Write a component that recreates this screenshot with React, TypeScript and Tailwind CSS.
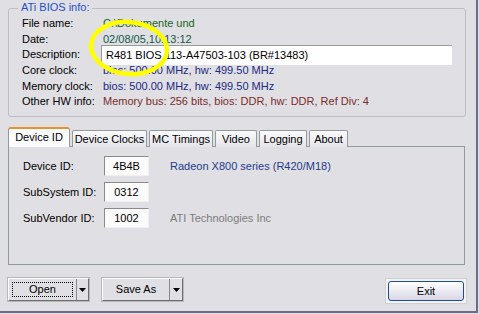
import React from "react";

const font = { fontFamily: '"Liberation Sans", Arial, sans-serif' };

const InfoRow = ({ label, children }: { label: string; children: React.ReactNode }) => (
  <div className="flex items-center h-[15.6px]">
    <span className="w-[81px] shrink-0 text-black">{label}</span>
    {children}
  </div>
);

const IdRow = ({ label, value, note, noteClass }: { label: string; value: string; note?: string; noteClass?: string }) => (
  <div className="flex items-center h-[20px]">
    <span className="w-[81px] shrink-0 text-black">{label}</span>
    <div className="w-[45px] h-[20px] flex items-center justify-center bg-[#fbfbfb] border-t border-l border-[#8a8a8a] border-b border-r border-b-[#f0f0f0] border-r-[#f0f0f0]">
      {value}
    </div>
    {note && <span className={"ml-[21px] " + noteClass}>{note}</span>}
  </div>
);

const Arrow = () => (
  <svg width="7" height="4" viewBox="0 0 7 4">
    <path d="M0 0h7L3.5 4z" fill="#000" />
  </svg>
);

const tabs = [
  { name: "Device Clocks", w: "w-[75px]" },
  { name: "MC Timings", w: "w-[64px]" },
  { name: "Video", w: "w-[42px]" },
  { name: "Logging", w: "w-[48px]" },
  { name: "About", w: "w-[39px]" },
];

export default function App() {
  return (
    <div className="w-[479px] h-[314px] bg-[#e0dfe3] text-[11px] leading-none relative overflow-hidden" style={font}>
      <div className="w-[478px] h-[313px] border-r-2 border-b-2 border-[#6d6b8a] flex flex-col px-[8px] pt-[8px]">
        {/* group box */}
        <div className="relative w-[458px] h-[109px] border border-[#bcbcc4] rounded-[3px] pl-[13px] pt-[7px]">
          <span className="absolute -top-[7px] left-[9px] px-[3px] bg-[#e0dfe3] text-[#1e4fd0]">ATi BIOS info:</span>
          <InfoRow label="File name:">
            <span className="text-[#17661f]">C:\Dokumente und</span>
          </InfoRow>
          <InfoRow label="Date:">
            <span className="text-[#115a46]">02/08/05,10:13:12</span>
          </InfoRow>
          <InfoRow label="Description:">
            <div className="-ml-[2px] w-[351px] h-[20px] flex items-center pl-[4px] bg-white border-t border-l border-[#9a9a9a] text-black">
              R481 BIOS 113-A47503-103 (BR#13483)
            </div>
          </InfoRow>
          <InfoRow label="Core clock:">
            <span className="text-[#1b2a82]">bios: 500.00 MHz, hw: 499.50 MHz</span>
          </InfoRow>
          <InfoRow label="Memory clock:">
            <span className="text-[#1b2a82]">bios: 500.00 MHz, hw: 499.50 MHz</span>
          </InfoRow>
          <InfoRow label="Other HW info:">
            <span className="text-[#7a2c2c]">Memory bus: 256 bits, bios: DDR, hw: DDR, Ref Div: 4</span>
          </InfoRow>
        </div>

        {/* tabs */}
        <div className="mt-[10px] flex items-end h-[20px] relative z-10">
          <div className="w-[62px] h-[20px] bg-[#fcfcfe] border-l border-r border-[#919b9c] border-t-2 border-t-[#e8902c] rounded-t-[3px] flex items-center justify-center pb-[2px]">
            Device ID
          </div>
          {tabs.map((t) => (
            <div
              key={t.name}
              className={t.w + " h-[17px] ml-[2px] first:ml-0 bg-gradient-to-b from-[#fbfbfd] to-[#e4e4ea] border border-[#919b9c] border-b-0 rounded-t-[2px] flex items-center justify-center"}
            >
              {t.name}
            </div>
          ))}
        </div>
        <div className="-mt-px w-[457px] h-[119px] border border-[#919b9c] pl-[14px] pt-[9px] flex flex-col gap-[6px]">
          <IdRow label="Device ID:" value="4B4B" note="Radeon X800 series (R420/M18)" noteClass="text-[#1e3c8c]" />
          <IdRow label="SubSystem ID:" value="0312" />
          <IdRow label="SubVendor ID:" value="1002" note="ATI Technologies Inc" noteClass="text-[#7c7c7c]" />
        </div>

        {/* buttons */}
        <div className="mt-[13px] flex items-start">
          <div className="w-[81px] h-[23px] flex border-t border-l border-white border-b border-r border-b-[#6e6e6e] border-r-[#6e6e6e] outline outline-1 outline-[#b8b8bc]">
            <div className="flex-1 flex items-center p-[3px]">
              <div className="w-full h-full border border-dotted border-black flex items-center justify-center">Open</div>
            </div>
            <div className="w-[12px] flex items-center justify-center border-l border-[#8a8a8a]">
              <Arrow />
            </div>
          </div>
          <div className="ml-[13px] w-[81px] h-[23px] flex border-t border-l border-white border-b border-r border-b-[#6e6e6e] border-r-[#6e6e6e] outline outline-1 outline-[#b8b8bc]">
            <div className="flex-1 flex items-center justify-center">Save As</div>
            <div className="w-[13px] flex items-center justify-center border-l border-[#8a8a8a]">
              <Arrow />
            </div>
          </div>
          <div className="ml-auto mr-[1px] p-[2px] bg-[#f2f2f4] border border-[#cfcfd4]">
            <div className="w-[76px] h-[20px] rounded-[3px] border border-[#1c4e8e] bg-gradient-to-b from-white to-[#d8d6e6] flex items-center justify-center">
              Exit
            </div>
          </div>
        </div>
      </div>

      {/* yellow highlight */}
      <svg className="absolute left-0 top-0 pointer-events-none" width="479" height="314">
        <ellipse cx="129" cy="48" rx="38" ry="26" fill="none" stroke="#ffff00" strokeWidth="4.5" transform="rotate(6 129 48)" />
      </svg>
    </div>
  );
}
